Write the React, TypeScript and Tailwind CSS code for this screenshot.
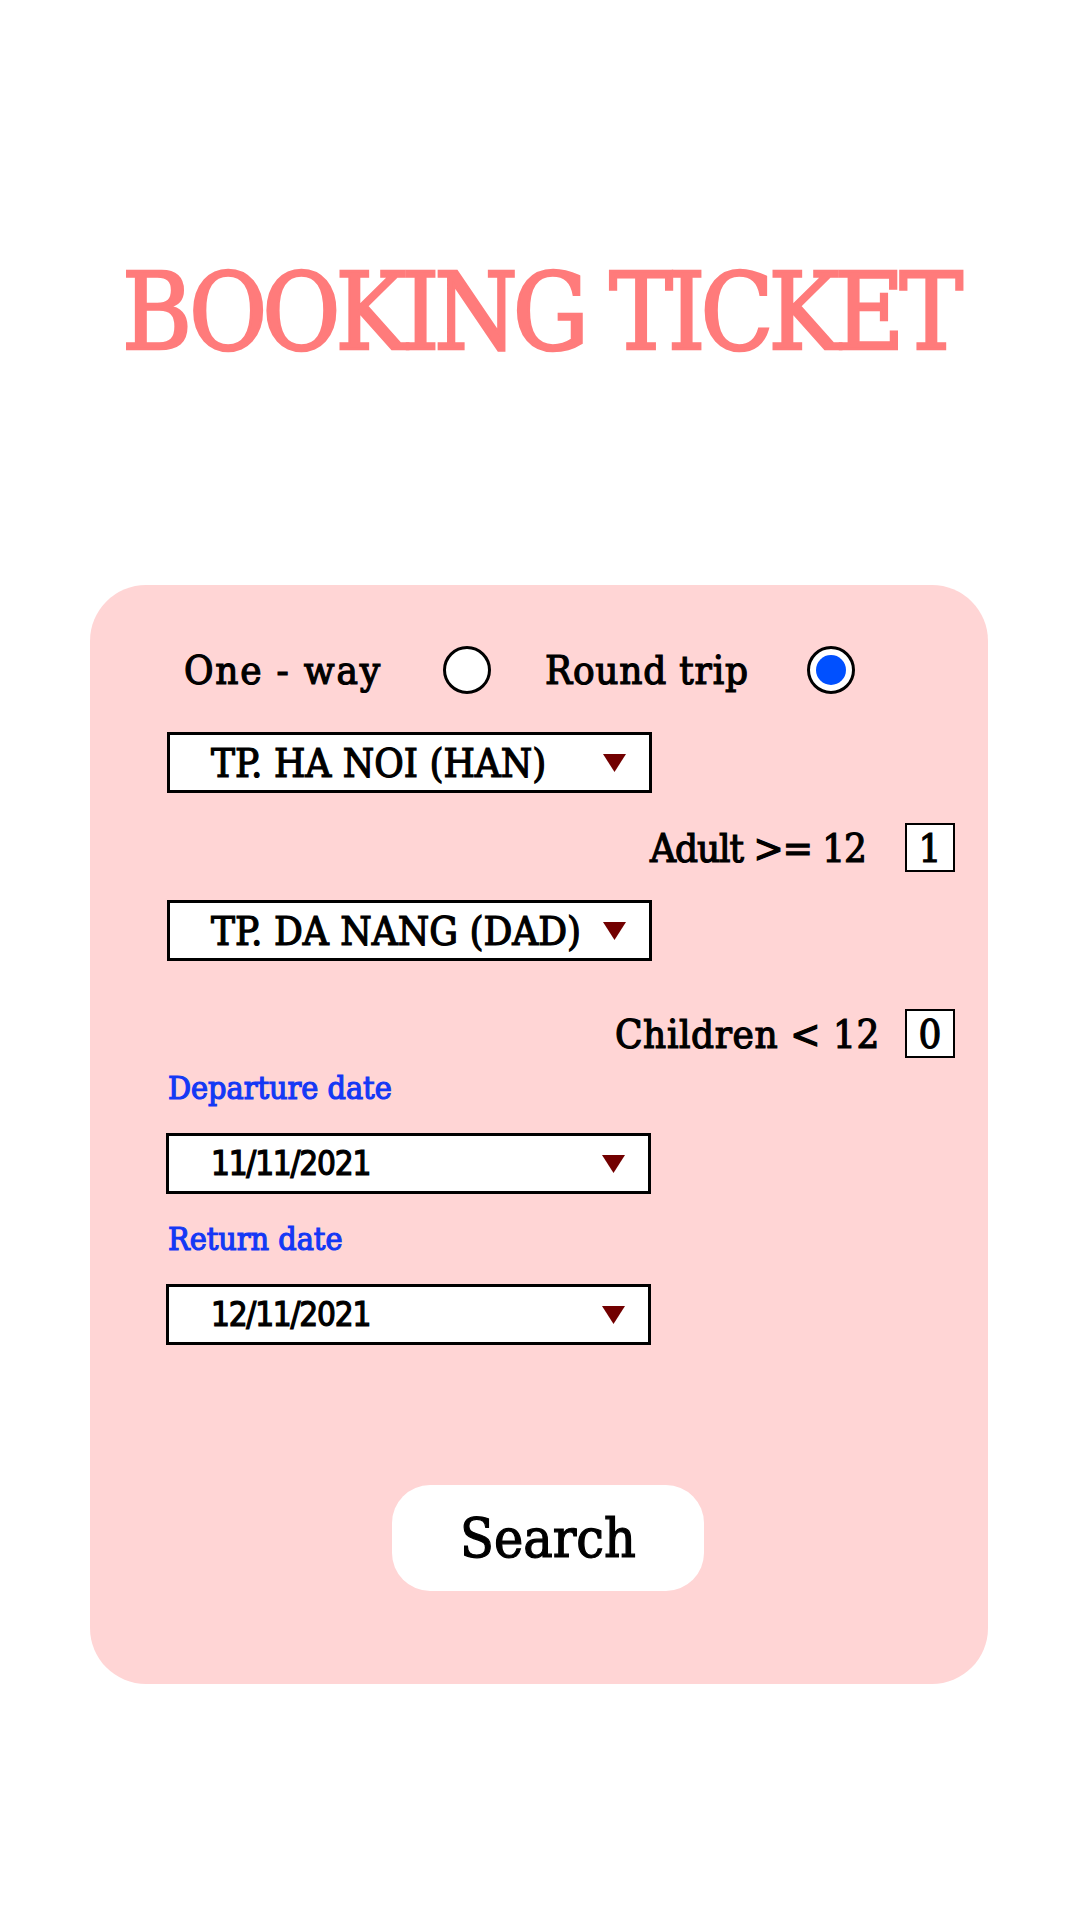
import React from "react";

const slab = "font-['DejaVu_Serif_Condensed','DejaVu_Serif',serif]";
const heavy = "[-webkit-text-stroke:1.2px_currentColor]";

function Arrow() {
  return (
    <svg width="23" height="18" viewBox="0 0 23 18" className="shrink-0">
      <polygon points="0,0 23,0 11.5,18" fill="#720000" />
    </svg>
  );
}

function SelectBox({ value, date = false }: { value: string; date?: boolean }) {
  return (
    <div
      className={`flex h-[61px] w-[485px] items-center border-[3px] border-black bg-white ${
        date ? "pl-[42px]" : "pl-[41px]"
      } pr-[23px]`}
    >
      <span
        className={
          date
            ? `flex-1 font-['DejaVu_Sans_Condensed','DejaVu_Sans',sans-serif] text-[33px] leading-none tracking-[-1.2px] text-black ${heavy}`
            : `flex-1 ${slab} text-[40px] leading-none text-black ${heavy}`
        }
      >
        {value}
      </span>
      <Arrow />
    </div>
  );
}

function Counter({
  label,
  value,
  className,
}: {
  label: string;
  value: string;
  className: string;
}) {
  return (
    <div className="flex items-center justify-end pr-[33px]">
      <span className={`${slab} text-[40px] leading-[40px] text-black ${heavy} ${className}`}>
        {label}
      </span>
      <div
        className={`flex h-[49px] w-[50px] items-center justify-center border-2 border-black bg-white ${slab} text-[40px] leading-none ${heavy}`}
      >
        {value}
      </div>
    </div>
  );
}

export default function App() {
  return (
    <div className="h-[1920px] w-[1080px] bg-white pt-[259px]">
      <h1
        className={`${slab} text-center text-[106px] leading-[108px] font-normal tracking-[-5px] text-[#ff7b7b] [-webkit-text-stroke:2.5px_#ff7b7b]`}
      >
        BOOKING TICKET
      </h1>

      <div className="ml-[90px] mt-[218px] h-[1099px] w-[898px] rounded-[56px] bg-[#ffd5d5] pt-[61px]">
        <div className="flex h-[48px] items-center">
          <span
            className={`ml-[94px] w-[259px] ${slab} text-[40px] leading-[40px] tracking-[1.8px] ${heavy}`}
          >
            One - way
          </span>
          <div className="h-[48px] w-[48px] rounded-full border-[3px] border-black bg-white" />
          <span
            className={`ml-[54px] w-[262px] ${slab} text-[40px] leading-[40px] tracking-[0.8px] ${heavy}`}
          >
            Round trip
          </span>
          <div className="flex h-[48px] w-[48px] items-center justify-center rounded-full border-[3px] border-black bg-white">
            <div className="h-[30px] w-[30px] rounded-full bg-[#0050ff]" />
          </div>
        </div>

        <div className="ml-[77px] mt-[38px]">
          <SelectBox value="TP. HA NOI (HAN)" />
        </div>

        <div className="mt-[30px]">
          <Counter label="Adult >= 12" value="1" className="mr-[39px] tracking-[-1px]" />
        </div>

        <div className="ml-[77px] mt-[28px]">
          <SelectBox value="TP. DA NANG (DAD)" />
        </div>

        <div className="mt-[48px]">
          <Counter label="Children < 12" value="0" className="mr-[25px] tracking-[0.6px]" />
        </div>

        <div
          className={`ml-[78px] mt-[14px] ${slab} text-[32px] leading-[32px] text-[#1438f5] ${heavy}`}
        >
          Departure date
        </div>
        <div className="ml-[76px] mt-[29px]">
          <SelectBox value="11/11/2021" date />
        </div>

        <div
          className={`ml-[78px] mt-[29px] ${slab} text-[32px] leading-[32px] text-[#1438f5] ${heavy}`}
        >
          Return date
        </div>
        <div className="ml-[76px] mt-[29px]">
          <SelectBox value="12/11/2021" date />
        </div>

        <button
          className={`ml-[302px] mt-[140px] flex h-[106px] w-[312px] items-center justify-center rounded-[38px] bg-white ${slab} text-[55px] leading-none text-black ${heavy}`}
        >
          Search
        </button>
      </div>
    </div>
  );
}
